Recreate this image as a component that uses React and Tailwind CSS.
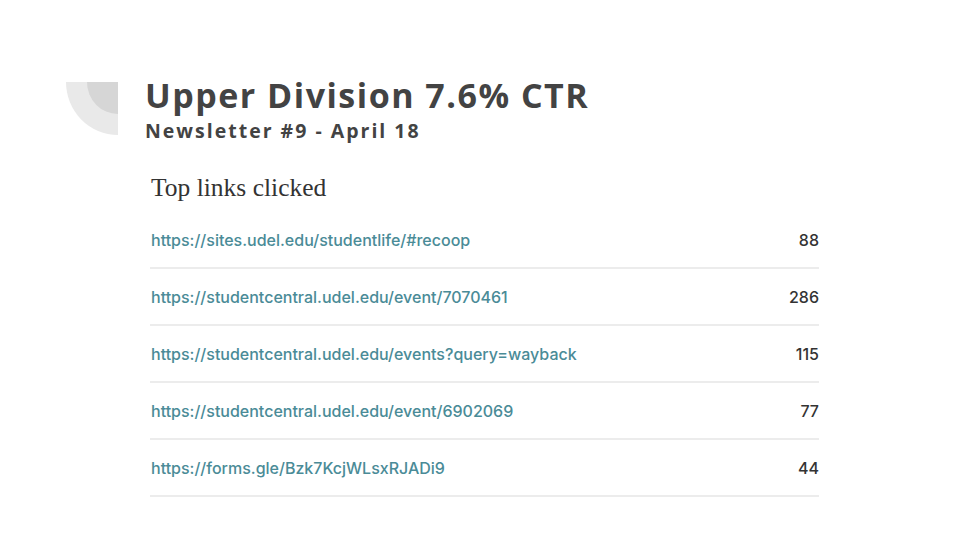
const LINKS = [
  { url: 'https://sites.udel.edu/studentlife/#recoop', clicks: 88 },
  { url: 'https://studentcentral.udel.edu/event/7070461', clicks: 286 },
  { url: 'https://studentcentral.udel.edu/events?query=wayback', clicks: 115 },
  { url: 'https://studentcentral.udel.edu/event/6902069', clicks: 77 },
  { url: 'https://forms.gle/Bzk7KcjWLsxRJADi9', clicks: 44 },
];

const Corner = () => (
  <svg width="52" height="53" viewBox="0 0 52 53" className="shrink-0 mt-[7px]">
    <path d="M0 0 H52 V53 A52 53 0 0 1 0 0 Z" fill="#e9e9e9" />
    <path d="M21 0 H52 V32 A31 32 0 0 1 21 0 Z" fill="#d6d6d6" />
  </svg>
);

const App = () => {
  return (
    <div className="w-[960px] h-[540px] bg-white overflow-hidden">
      {/* Title */}
      <div className="flex gap-[27px] pl-[66px] pt-[75px]">
        <Corner />
        <div className="font-['Open_Sans',sans-serif] text-[#434343]">
          <h1 className="text-[34px] leading-[40px] font-bold tracking-[1.5px]">
            Upper Division 7.6% CTR
          </h1>
          <p className="text-[19.5px] leading-[24px] font-bold tracking-[2px] mt-[4px]">
            Newsletter #9 - April 18
          </p>
        </div>
      </div>

      {/* Links table */}
      <div className="ml-[150px] w-[669px] mt-[30px]">
        <h2 className="font-['Liberation_Serif',serif] text-[25.5px] leading-[30px] text-[#333] pl-px">
          Top links clicked
        </h2>
        <ul className="mt-[9px]">
          {LINKS.map((link) => (
            <li
              key={link.url}
              className="flex items-center justify-between h-[57px] pt-px border-b-2 border-[#ececec] font-['Inter',sans-serif] text-[16px]"
            >
              <span className="text-[#4a8b97] font-medium pl-px">{link.url}</span>
              <span className="text-[#333] font-medium">{link.clicks}</span>
            </li>
          ))}
        </ul>
      </div>
    </div>
  );
};

export default App;
